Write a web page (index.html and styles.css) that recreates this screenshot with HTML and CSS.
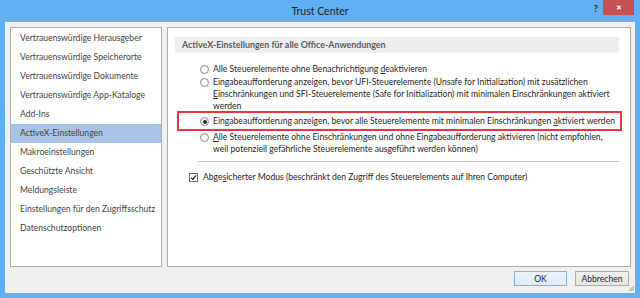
FILE: index.html
```html
<!DOCTYPE html>
<html lang="de">
<head>
  <meta charset="UTF-8">
  <title>Trust Center</title>
  <link rel="stylesheet" href="styles.css">
</head>
<body>

  <div class="window">
    <div class="titlebar">
      <div></div>
      <div class="title">Trust Center</div>
      <div class="controls">
        <span class="help">?</span>
        <span class="close">&#x2715;</span>
      </div>
    </div>

    <div class="dialog">
      <div class="main">
        <!-- Kategorien -->
        <ul class="nav">
          <li>Vertrauenswürdige Herausgeber</li>
          <li>Vertrauenswürdige Speicherorte</li>
          <li>Vertrauenswürdige Dokumente</li>
          <li>Vertrauenswürdige App-Kataloge</li>
          <li>Add-Ins</li>
          <li class="active">ActiveX-Einstellungen</li>
          <li>Makroeinstellungen</li>
          <li>Geschützte Ansicht</li>
          <li>Meldungsleiste</li>
          <li>Einstellungen für den Zugriffsschutz</li>
          <li>Datenschutzoptionen</li>
        </ul>

        <div class="panel">
          <div class="section-head">ActiveX-Einstellungen für alle Office-Anwendungen</div>

          <div class="options">
            <div class="option">
              <span class="radio"></span>
              <span>Alle Steuerelemente ohne Benachrichtigung <u>d</u>eaktivieren</span>
            </div>
            <div class="option">
              <span class="radio"></span>
              <span>Eingabeaufforderung anzeigen, bevor UFI-Steuerelemente (Unsafe for Initialization) mit zusätzlichen<br><u>E</u>inschränkungen und SFI-Steuerelemente (Safe for Initialization) mit minimalen Einschränkungen aktiviert<br>werden</span>
            </div>
            <div class="option marked">
              <span class="radio checked"></span>
              <span>Eingabeaufforderung anzeigen, bevor alle Steuerelemente mit minimalen Einschränkungen <u>a</u>ktiviert werden</span>
            </div>
            <div class="option">
              <span class="radio"></span>
              <span><u>A</u>lle Steuerelemente ohne Einschränkungen und ohne Eingabeaufforderung aktivieren (nicht empfohlen,<br>weil potenziell gefährliche Steuerelemente ausgeführt werden können)</span>
            </div>
          </div>

          <div class="sep"></div>

          <div class="check">
            <span class="box">
              <svg width="7" height="7" viewBox="0 0 7 7"><path d="M1 3.6 L2.8 5.4 L6 1.4" fill="none" stroke="#222" stroke-width="1.3"/></svg>
            </span>
            <span>Abge<u>s</u>icherter Modus (beschränkt den Zugriff des Steuerelements auf Ihren Computer)</span>
          </div>
        </div>
      </div>

      <div class="buttons">
        <button class="btn default">OK</button>
        <button class="btn">Abbrechen</button>
      </div>
    </div>

    <div class="grip"></div>
  </div>

</body>
</html>
```

FILE: styles.css
```css
body {
  margin: 0;
  font-family: Lato, "Liberation Sans", sans-serif;
  font-size: 8.6px;
  color: #262626;
}

.window {
  position: relative;
  width: 640px;
  height: 298px;
  background-color: #62b0f4;
  display: flex;
  flex-direction: column;
}

.titlebar {
  height: 22px;
  display: grid;
  grid-template-columns: 1fr auto 1fr;
  align-items: center;
}

.title {
  font-size: 10.5px;
  color: #1e1e1e;
  padding-bottom: 1px;
}

.controls {
  display: flex;
  justify-content: flex-end;
  align-self: start;
  padding-right: 6px;
}

.help {
  font-size: 9px;
  font-weight: bold;
  color: #2a2a2a;
  margin-top: 3px;
  margin-right: 5px;
}

.close {
  width: 31px;
  height: 15px;
  line-height: 15px;
  text-align: center;
  background-color: #c75050;
  color: #fff;
  font-size: 7px;
  font-weight: bold;
}

.dialog {
  flex: 1;
  margin: 0 5px 5px;
  padding: 5px 4px 0 5px;
  background-color: #f0f0f0;
  display: flex;
  flex-direction: column;
}

.main {
  display: flex;
  gap: 5px;
  height: 240px;
}

.nav {
  width: 150px;
  margin: 0;
  padding: 1px 0 0;
  list-style: none;
  background-color: #fff;
  border: 1px solid #acacac;
  color: #444;
}

.nav li {
  height: 19px;
  line-height: 19px;
  padding-left: 9px;
  white-space: nowrap;
}

.nav li.active {
  background-color: #a9c3e6;
}

.panel {
  flex: 1;
  background-color: #fff;
  border: 1px solid #acacac;
  padding: 9px 11px 0 7px;
}

.section-head {
  height: 16px;
  line-height: 16px;
  padding-left: 7px;
  background-color: #eeeeee;
  color: #5b5b5b;
  font-size: 8.9px;
  font-weight: bold;
}

.options {
  margin: 10px -3px 0 2px;
}

.option {
  display: flex;
  align-items: flex-start;
  gap: 4px;
  padding-left: 23px;
  line-height: 12px;
  margin-bottom: 1px;
  white-space: nowrap;
}

.option.marked {
  margin-top: -2px;
  margin-bottom: 0;
  padding: 2px 0 2px 21px;
  border: 2px solid #e0393e;
}

.radio {
  flex: none;
  width: 7px;
  height: 7px;
  margin-top: 2px;
  border: 1px solid #8a8a8a;
  border-radius: 50%;
  background: linear-gradient(#f4f4f4, #fff);
  display: flex;
  align-items: center;
  justify-content: center;
}

.radio.checked::after {
  content: "";
  width: 4px;
  height: 4px;
  border-radius: 50%;
  background-color: #2b2b2b;
}

.sep {
  margin: 6px 0 0 23px;
  border-top: 1px solid #c4c4c4;
}

.check {
  display: flex;
  align-items: flex-start;
  gap: 5px;
  margin-top: 9px;
  padding-left: 14px;
  line-height: 12px;
  white-space: nowrap;
}

.box {
  flex: none;
  width: 7px;
  height: 7px;
  margin-top: 2px;
  border: 1px solid #6f6f6f;
  background-color: #fff;
  display: flex;
  align-items: center;
  justify-content: center;
}

.buttons {
  display: flex;
  justify-content: flex-end;
  gap: 8px;
  margin-top: 4px;
  padding-right: 2px;
}

.btn {
  height: 15px;
  padding: 0;
  font-family: inherit;
  font-size: 8.6px;
  color: #262626;
  background: linear-gradient(#f0f0f0, #e5e5e5);
  border: 1px solid #acacac;
}

.btn.default {
  width: 53px;
  border-color: #7eb4ea;
  background: linear-gradient(#ecf4fc, #dcecfc);
}

.btn:not(.default) {
  width: 54px;
}

.grip {
  position: absolute;
  right: 6px;
  bottom: 7px;
  width: 6px;
  height: 6px;
  background: radial-gradient(circle, #a8a8a8 0.6px, transparent 0.9px) 0 0 / 2px 2px;
  clip-path: polygon(100% 0, 100% 100%, 0 100%);
}
```
